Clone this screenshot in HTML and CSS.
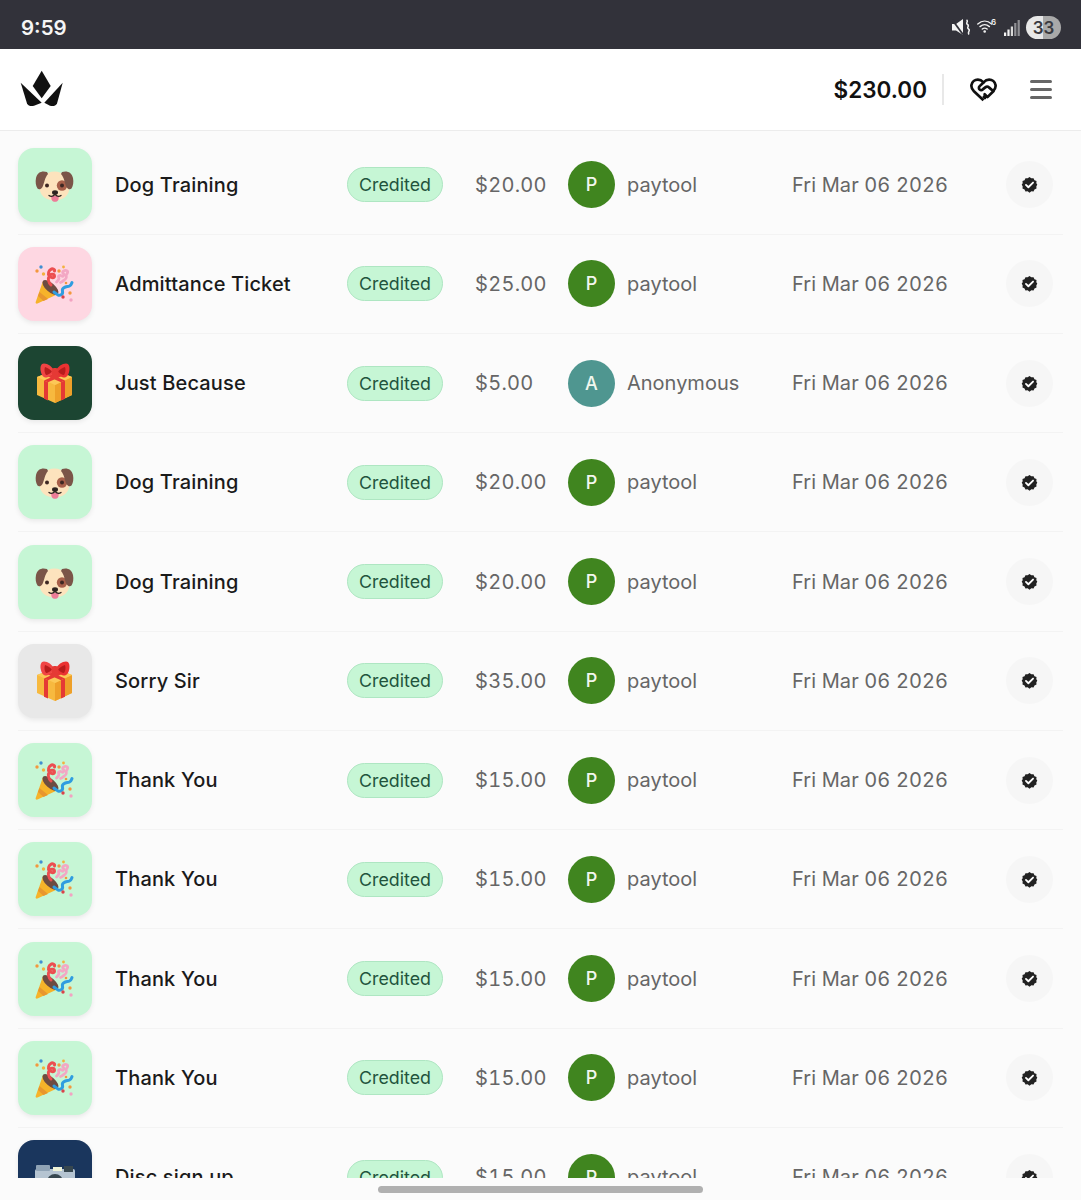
FILE: index.html
```html
<!DOCTYPE html>
<html lang="en">
<head>
<meta charset="utf-8">
<title>Transactions</title>
<link rel="stylesheet" href="styles.css">
</head>
<body>
<svg class="defs" width="0" height="0" aria-hidden="true">
  <symbol id="dog" viewBox="0 0 40 40">
    <path d="M19.500 6.500C11 6.500 4.500 13 4.500 22c0 8.500 6.500 13.500 15 13.500S34.500 30.500 34.500 22C34.500 13 28 6.500 19.500 6.500Z" fill="#fde3bd"/>
    <circle cx="27" cy="20.500" r="5.200" fill="#a8604a"/>
    <circle cx="27" cy="20.500" r="2" fill="#3e2723"/>
    <circle cx="12" cy="20.500" r="2" fill="#3e2723"/>
    <path d="M12 7C7 5.500 2.500 7 1 13c-.8 4-.2 8 1.500 10.500 1.500 1.500 3.500.8 5-1.500C9.500 18 9.500 13 13 9Z" fill="#7b5548"/>
    <path d="M27 7C32 5.500 36.500 7 38 13c.8 4 .2 8-1.500 10.500-1.500 1.500-3.500.8-5-1.500-2-4-2-9-5.500-13Z" fill="#7b5548"/>
    <path d="M16 31h8l-.6 3.500c-.4 1.800-1.700 2.300-3.400 2.300s-3-.5-3.400-2.300Z" fill="#ec7c98"/>
    <path d="M14 30.500c2 1.600 4 1 6-1 2 2 4 2.600 6 1" fill="none" stroke="#2d2320" stroke-width="1.300" stroke-linecap="round"/>
    <ellipse cx="20" cy="27.500" rx="3" ry="2.300" fill="#2d2320"/>
  </symbol>
  <symbol id="party" viewBox="0 0 40 40">
    <path d="M8 17 23 30 2.500 39.500c-1.200.5-2.200-.4-1.800-1.600Z" fill="#f6b32a"/>
    <path d="M4.500 28 13 35l-4.500 2-5.500-5Z" fill="#e8962e"/>
    <ellipse cx="15.500" cy="23.500" rx="10" ry="4.500" transform="rotate(42 15.500 23.500)" fill="#6d4c41"/>
    <path d="M16 21c-2.500-2.500-3.500-6.500-1.500-9.500 1.200-1.800 5-1.500 5 .7s-3.200 2.200-5.300-.5c-1.500-2-.5-5 1.500-6.300 1.800-1.200 4.300 0 3.800 1.600" fill="none" stroke="#ec4e50" stroke-width="3" stroke-linecap="round"/>
    <path d="M21.500 18c1.500-1.500 3.200-3 2.200-4.500s1-3 3-1.500 2.800-2 1.300-3 1.500-3 3.500-2.500 1 3 0 4 1 3-1 4.500-3 3-5 3.500" fill="none" stroke="#f3a7c4" stroke-width="2.800" stroke-linecap="round" stroke-linejoin="round"/>
    <path d="M19 28c3 2.500 4.500 4.500 7.500 2.500s-1-4.500 2-6.500 4-1 6-2 1.800-2 2.500-3.500" fill="none" stroke="#2f9de0" stroke-width="3" stroke-linecap="round"/>
    <circle cx="6" cy="3" r="1.700" fill="#3f8fd2"/><circle cx="2" cy="7" r="1.700" fill="#f3983e"/>
    <circle cx="8.500" cy="10" r="1.700" fill="#f3b13e"/><circle cx="24" cy="7" r="1.700" fill="#f3983e"/>
    <circle cx="28.500" cy="3" r="1.400" fill="#f3b13e"/><circle cx="35" cy="29" r="1.700" fill="#f3983e"/>
    <circle cx="28" cy="33" r="1.700" fill="#d9434a"/><circle cx="36" cy="36" r="1.700" fill="#f2a3c2"/>
    <circle cx="31" cy="19" r="1.300" fill="#f3983e"/>
  </symbol>
  <symbol id="gift" viewBox="0 0 40 40">
    <path d="M2 14 20 7l17 7v18l-17 8-18-8Z" fill="#f7b93f"/>
    <path d="M20 22 37 14v18l-17 8Z" fill="#eea029"/>
    <path d="M2 14 20 22 37 14 20 7Z" fill="#fcc857"/>
    <path d="M9 17.500l4 1.800V37.500l-4-1.800ZM26 19.300l4-1.800V35.700l-4 1.800Z" fill="#e53935"/>
    <path d="M9 17.500 26 10l4 1.800-17 7.500ZM26 19.300 9 11.800 13 10l17 7.500Z" fill="#e53935"/>
    <path d="M19.500 8C17 3.500 13 .5 9 .5 6 .5 5 4 5.700 8c.6 3.500 2.300 6 4.300 6.500 3 .5 7-2 9.500-6.500Z" fill="#f04444"/>
    <path d="M20.500 8c2.500-4.500 6.500-7.500 10.500-7.500 3 0 4 3.500 3.300 7.500-.6 3.500-2.300 6-4.300 6.500-3 .5-7-2-9.500-6.500Z" fill="#ea3232"/>
    <path d="M10 4c2.500.5 5 2.500 7 4.500-2 2-4 3.500-6 3.500-1.500-2-2-5.500-1-8ZM30 4c-2.500.5-5 2.500-7 4.500 2 2 4 3.500 6 3.500 1.500-2 2-5.500 1-8Z" fill="#b71c1c"/>
    <path d="M17 6c1-1.200 5-1.200 6 0 .6 1.800.2 5-.3 7h-5.400c-.5-2-.9-5.200-.3-7Z" fill="#e53935"/>
  </symbol>
  <symbol id="camera" viewBox="0 0 40 40">
    <rect x="0" y="12" width="40" height="24" rx="2" fill="#b5c4d1"/>
    <rect x="1" y="8" width="14" height="6" rx="1" fill="#8fa3b5"/>
    <rect x="18" y="10" width="9" height="4" fill="#f0f4d8"/>
    <rect x="29" y="9" width="9" height="6" fill="#37474f"/>
    <circle cx="20" cy="25" r="8" fill="#37474f"/>
  </symbol>
  <symbol id="badge" viewBox="0 0 24 24">
    <path d="M12 1.500l2.600 1.800 3.100-.3 1.300 2.900 2.900 1.300-.3 3.100L23 12l-1.400 2.700.3 3.100-2.900 1.300-1.300 2.900-3.100-.3L12 23.500l-2.600-1.800-3.100.3-1.300-2.900-2.900-1.300.3-3.100L1 12l1.400-1.700-.3-3.100L5 5.900 6.300 3l3.100.3Z" fill="#222"/>
    <path d="M7 12.500l3.400 3.400L17 9.300" fill="none" stroke="#fff" stroke-width="2.600" stroke-linecap="round" stroke-linejoin="round"/>
  </symbol>
</svg>

<div class="page">
  <div class="status">
    <span class="clock">9:59</span>
    <div class="status-icons">
      <svg class="st-mute" viewBox="0 0 18 17">
        <path d="M0 5h4l7-5v16l-7-4.500H0Z" fill="#f4f4f4"/>
        <path d="M0 .5 11 15.500" stroke="#32323a" stroke-width="1.800"/>
        <path d="M14.500 1c2.500 1.500-1.500 3 1 4.500s-1.500 3 1 4.500-1.500 3 .5 5.500" fill="none" stroke="#f4f4f4" stroke-width="1.500"/>
      </svg>
      <div class="wifi-wrap">
        <svg class="st-wifi" viewBox="0 0 15 14">
          <path d="M.8 5c4.200-3.800 9.600-3.800 13.800 0M3 7.600c3-2.500 6.400-2.500 9.400 0M5.300 10c1.600-1.200 3.200-1.200 4.800 0" fill="none" stroke="#f2f2f2" stroke-width="1.400" stroke-linecap="round"/>
          <circle cx="7.700" cy="12.500" r="1.300" fill="#f2f2f2"/>
        </svg>
        <span class="st-six">6</span>
      </div>
      <svg class="st-signal" viewBox="0 0 16 16">
        <rect x="0" y="12.500" width="2.200" height="3.500" fill="#f2f2f2"/>
        <rect x="3.400" y="9.500" width="2.200" height="6.500" fill="#f2f2f2"/>
        <rect x="6.800" y="6.500" width="2.200" height="9.500" fill="#d8d8d8"/>
        <rect x="10.200" y="3" width="2.200" height="13" fill="#8f8f94"/>
        <rect x="13.600" y="0" width="2.200" height="16" fill="#8f8f94"/>
      </svg>
      <div class="battery"><span class="battery-num">33</span></div>
    </div>
  </div>

  <header class="topbar">
    <svg class="logo" viewBox="0 0 44 38">
      <path d="M21.700 0.700 30.700 16 21.700 28.300 12.700 16Z" fill="#111"/>
      <path d="M.7 12.700 21.700 32.700 14 35.700c-3 .8-5.500.3-7-2.200Z" fill="#111"/>
      <path d="M42.700 12.700 24.300 32.700 30 35.700c3 .8 5.500.3 7-2.200Z" fill="#111"/>
    </svg>
    <div class="topbar-right">
      <span class="balance">$230.00</span>
      <span class="vrule"></span>
      <svg class="heart" viewBox="0 0 24 24">
        <path d="M12 21.500 3.500 13.500C1.500 11.500 1 9.800 1.300 8c.5-3 3-4.800 5.700-4.800 2 0 3.600 1 5 2.500 1.400-1.500 3-2.500 5-2.500 2.700 0 5.200 1.800 5.700 4.800.3 1.800-.2 3.500-2.200 5.500"
          fill="none" stroke="#111" stroke-width="2.400" stroke-linejoin="round"/>
        <path d="M12 5.700 8.600 9c-1 1-.8 2.300 0 3 .9.700 2 .6 3-.3l2-1.600c1-.8 2.300-.8 3.200 0l4 3.400-5.300 5.300-1.700-1.700-1.500 1.500 1 1M14.800 18l-1.800-1.800" fill="none" stroke="#111" stroke-width="2.400" stroke-linejoin="round" stroke-linecap="round"/>
      </svg>
      <div class="burger"><span></span><span></span><span></span></div>
    </div>
  </header>

  <main class="list">
    <div class="row">
      <div class="thumb mint"><svg class="emoji"><use href="#dog"/></svg></div>
      <div class="title">Dog Training</div>
      <div class="pill-cell"><span class="pill">Credited</span></div>
      <div class="amount">$20.00</div>
      <div class="avatar green">P</div>
      <div class="name">paytool</div>
      <div class="date">Fri Mar 06 2026</div>
      <div class="check"><svg class="badge"><use href="#badge"/></svg></div>
    </div>
    <div class="row">
      <div class="thumb pink"><svg class="emoji"><use href="#party"/></svg></div>
      <div class="title">Admittance Ticket</div>
      <div class="pill-cell"><span class="pill">Credited</span></div>
      <div class="amount">$25.00</div>
      <div class="avatar green">P</div>
      <div class="name">paytool</div>
      <div class="date">Fri Mar 06 2026</div>
      <div class="check"><svg class="badge"><use href="#badge"/></svg></div>
    </div>
    <div class="row">
      <div class="thumb forest"><svg class="emoji"><use href="#gift"/></svg></div>
      <div class="title">Just Because</div>
      <div class="pill-cell"><span class="pill">Credited</span></div>
      <div class="amount">$5.00</div>
      <div class="avatar teal">A</div>
      <div class="name">Anonymous</div>
      <div class="date">Fri Mar 06 2026</div>
      <div class="check"><svg class="badge"><use href="#badge"/></svg></div>
    </div>
    <div class="row">
      <div class="thumb mint"><svg class="emoji"><use href="#dog"/></svg></div>
      <div class="title">Dog Training</div>
      <div class="pill-cell"><span class="pill">Credited</span></div>
      <div class="amount">$20.00</div>
      <div class="avatar green">P</div>
      <div class="name">paytool</div>
      <div class="date">Fri Mar 06 2026</div>
      <div class="check"><svg class="badge"><use href="#badge"/></svg></div>
    </div>
    <div class="row">
      <div class="thumb mint"><svg class="emoji"><use href="#dog"/></svg></div>
      <div class="title">Dog Training</div>
      <div class="pill-cell"><span class="pill">Credited</span></div>
      <div class="amount">$20.00</div>
      <div class="avatar green">P</div>
      <div class="name">paytool</div>
      <div class="date">Fri Mar 06 2026</div>
      <div class="check"><svg class="badge"><use href="#badge"/></svg></div>
    </div>
    <div class="row">
      <div class="thumb grey"><svg class="emoji"><use href="#gift"/></svg></div>
      <div class="title">Sorry Sir</div>
      <div class="pill-cell"><span class="pill">Credited</span></div>
      <div class="amount">$35.00</div>
      <div class="avatar green">P</div>
      <div class="name">paytool</div>
      <div class="date">Fri Mar 06 2026</div>
      <div class="check"><svg class="badge"><use href="#badge"/></svg></div>
    </div>
    <div class="row">
      <div class="thumb mint"><svg class="emoji"><use href="#party"/></svg></div>
      <div class="title">Thank You</div>
      <div class="pill-cell"><span class="pill">Credited</span></div>
      <div class="amount">$15.00</div>
      <div class="avatar green">P</div>
      <div class="name">paytool</div>
      <div class="date">Fri Mar 06 2026</div>
      <div class="check"><svg class="badge"><use href="#badge"/></svg></div>
    </div>
    <div class="row">
      <div class="thumb mint"><svg class="emoji"><use href="#party"/></svg></div>
      <div class="title">Thank You</div>
      <div class="pill-cell"><span class="pill">Credited</span></div>
      <div class="amount">$15.00</div>
      <div class="avatar green">P</div>
      <div class="name">paytool</div>
      <div class="date">Fri Mar 06 2026</div>
      <div class="check"><svg class="badge"><use href="#badge"/></svg></div>
    </div>
    <div class="row">
      <div class="thumb mint"><svg class="emoji"><use href="#party"/></svg></div>
      <div class="title">Thank You</div>
      <div class="pill-cell"><span class="pill">Credited</span></div>
      <div class="amount">$15.00</div>
      <div class="avatar green">P</div>
      <div class="name">paytool</div>
      <div class="date">Fri Mar 06 2026</div>
      <div class="check"><svg class="badge"><use href="#badge"/></svg></div>
    </div>
    <div class="row">
      <div class="thumb mint"><svg class="emoji"><use href="#party"/></svg></div>
      <div class="title">Thank You</div>
      <div class="pill-cell"><span class="pill">Credited</span></div>
      <div class="amount">$15.00</div>
      <div class="avatar green">P</div>
      <div class="name">paytool</div>
      <div class="date">Fri Mar 06 2026</div>
      <div class="check"><svg class="badge"><use href="#badge"/></svg></div>
    </div>
    <div class="row">
      <div class="thumb navy"><svg class="emoji"><use href="#camera"/></svg></div>
      <div class="title">Disc sign up</div>
      <div class="pill-cell"><span class="pill">Credited</span></div>
      <div class="amount">$15.00</div>
      <div class="avatar green">P</div>
      <div class="name">paytool</div>
      <div class="date">Fri Mar 06 2026</div>
      <div class="check"><svg class="badge"><use href="#badge"/></svg></div>
    </div>
  </main>

  <footer class="navbar"><span class="homebar"></span></footer>
</div>
</body>
</html>
```

FILE: styles.css
```css
* { box-sizing: border-box; }
html, body { margin: 0; padding: 0; height: 1200px; overflow: hidden; }
body { font-family: Inter, "Liberation Sans", sans-serif; background: #fbfbfb; color: #111; }
.defs { position: absolute; }
.page { display: flex; flex-direction: column; height: 1200px; }

.status { flex: 0 0 49px; background: #32323a; display: flex; align-items: center; justify-content: space-between; padding: 6px 20px 0 21px; }
.clock { color: #f5f5f5; font-size: 20.500px; font-weight: 600; }
.status-icons { display: flex; align-items: center; }
.st-mute { width: 18px; height: 17px; margin-right: 7px; }
.wifi-wrap { position: relative; width: 19px; height: 14px; margin-right: 8px; margin-top: -4px; }
.st-wifi { display: block; width: 15px; height: 14px; }
.st-six { position: absolute; left: 14px; top: -1px; font-size: 8px; line-height: 9px; font-weight: 600; color: #f2f2f2; }
.st-signal { width: 16px; height: 16px; margin-right: 6px; }
.battery { width: 35px; height: 23px; border-radius: 12px; background: linear-gradient(90deg, #e8e8e8 0 50%, #a9a9a9 50% 100%); display: flex; align-items: center; justify-content: center; }
.battery-num { font-size: 17px; font-weight: 600; color: #3a3a40; }

.topbar { flex: 0 0 82px; background: #fff; border-bottom: 1px solid #ececec; display: flex; align-items: center; justify-content: space-between; padding: 0 29px 0 20px; }
.logo { width: 44px; height: 38px; margin-top: -2px; }
.topbar-right { display: flex; align-items: center; }
.balance { font-size: 22.500px; font-weight: 600; color: #111; }
.vrule { width: 2px; height: 31px; background: #e8e8e8; margin: 0 26px 0 15px; }
.heart { width: 27px; height: 27px; margin-right: 33px; }
.burger { display: flex; flex-direction: column; gap: 4.500px; width: 22px; }
.burger span { display: block; height: 3.500px; border-radius: 2px; background: #666; }

.list { flex: 1 1 0; min-height: 0; overflow: hidden; padding: 4.400px 18px 0; }
.row { height: 99.250px; display: grid; grid-template-columns: 97px 232px 128px 93px 59px 165px 214px 47px; align-items: center; border-bottom: 1px solid #f3f3f3; }

.thumb { width: 74px; height: 74px; border-radius: 16px; display: flex; align-items: center; justify-content: center; box-shadow: 0 2px 5px rgba(0, 0, 0, .08); }
.mint { background: #c6f6d5; }
.pink { background: #fed7e2; }
.forest { background: #1c4532; }
.grey { background: #e8e8e8; }
.navy { background: #1a365d; }
.emoji { width: 40px; height: 40px; }

.title { font-size: 20px; font-weight: 500; letter-spacing: .15px; color: #1a1a1a; }
.pill-cell { display: flex; }
.pill { display: inline-flex; align-items: center; justify-content: center; width: 96px; height: 35px; border-radius: 18px; background: #c6f6d5; border: 1px solid #aee6c2; color: #22543d; font-size: 17.800px; }
.amount { font-size: 20px; color: #666; letter-spacing: .3px; font-variant-numeric: tabular-nums; }
.avatar { width: 47px; height: 47px; border-radius: 50%; display: flex; align-items: center; justify-content: center; color: #f2f7ee; font-size: 18px; font-weight: 500; }
.green { background: #40851f; }
.teal { background: #4f9690; }
.name { font-size: 20px; color: #666; }
.date { font-size: 20px; color: #666; letter-spacing: .1px; font-variant-numeric: tabular-nums; }
.check { width: 47px; height: 47px; border-radius: 50%; background: #f6f6f6; display: flex; align-items: center; justify-content: center; }
.badge { width: 17px; height: 17px; }

.navbar { flex: 0 0 22px; display: flex; justify-content: center; padding-top: 8px; background: #fbfbfb; }
.homebar { width: 325px; height: 7px; border-radius: 4px; background: #b0b0b0; }
```
